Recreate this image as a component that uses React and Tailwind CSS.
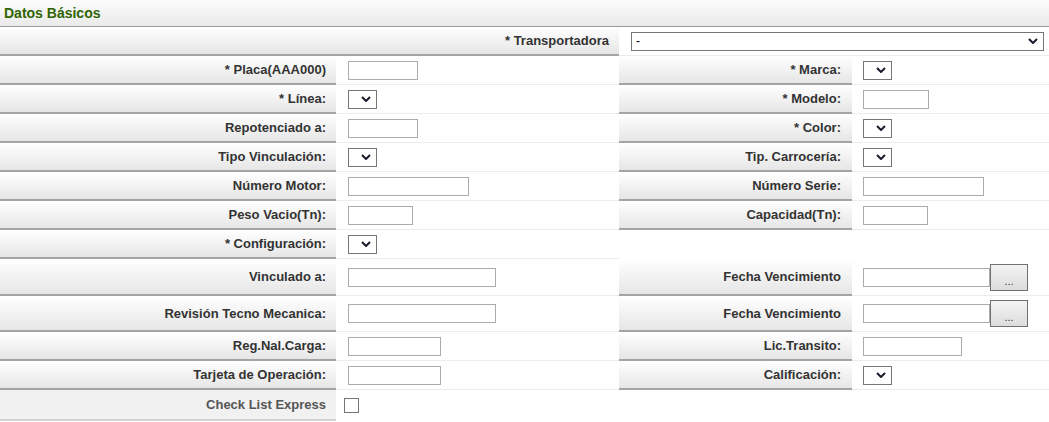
import React from "react";

const Chevron = () => (
  <svg width="10" height="6" viewBox="0 0 10 6" fill="none">
    <polyline points="1,1 5,5 9,1" stroke="#1b1b2b" strokeWidth="2" />
  </svg>
);

const Label = ({ children, right = false, span = false, h = "h-[29px]" }) => (
  <div
    className={`${h} ${span ? "col-span-2" : ""} ${
      right ? "pr-[11px]" : "pr-[10px]"
    } flex items-center justify-end pt-[1px] bg-linear-to-b from-white to-[#e6e6e6] border-b-2 border-[#a4a4a4] text-[13px] font-bold text-[#333]`}
  >
    {children}
  </div>
);

const Cell = ({ children, span = false, right = false, h = "h-[29px]" }) => (
  <div
    className={`${h} ${span ? "col-span-2" : ""} ${
      right ? "pl-[11px]" : "pl-[12px]"
    } border-b border-[#ececec] flex items-center bg-white`}
  >
    {children}
  </div>
);

const TextBox = ({ w }) => (
  <div className={`${w} h-[19px] border border-[#ababab] bg-white`} />
);

const Select = () => (
  <div className="w-[29px] h-[19px] border border-[#767676] bg-white flex items-center justify-end pr-[5px]">
    <Chevron />
  </div>
);

const DateBox = () => (
  <div className="flex items-center">
    <div className="w-[127px] h-[19px] border border-[#ababab] bg-white" />
    <div className="w-[38px] h-[27px] border border-[#707070] bg-linear-to-b from-[#f4f4f4] to-[#dcdcdc] flex items-end justify-center pb-[3px] text-[11px] leading-none text-[#333]">
      ...
    </div>
  </div>
);

export default function App() {
  return (
    <div
      className="w-[1049px] h-[422px] bg-white overflow-hidden"
      style={{ fontFamily: '"Liberation Sans", Arial, sans-serif' }}
    >
      <div className="h-[27px] border-b border-[#9a9a9a] bg-linear-to-b from-[#fcfcfc] to-[#eaeaea] flex items-center pl-[4px] text-[14px] font-bold text-[#2f6400]">
        Datos Básicos
      </div>

      <div className="grid grid-cols-[336px_283px_233px_197px]">
        <Label span>* Transportadora</Label>
        <Cell span>
          <div className="w-[413px] h-[19px] border border-[#767676] bg-white flex items-center justify-between pl-[4px] pr-[5px] text-[12px] text-black">
            <span>-</span>
            <Chevron />
          </div>
        </Cell>

        <Label>* Placa(AAA000)</Label>
        <Cell><TextBox w="w-[70px]" /></Cell>
        <Label right>* Marca:</Label>
        <Cell right><Select /></Cell>

        <Label>* Línea:</Label>
        <Cell><Select /></Cell>
        <Label right>* Modelo:</Label>
        <Cell right><TextBox w="w-[66px]" /></Cell>

        <Label>Repotenciado a:</Label>
        <Cell><TextBox w="w-[70px]" /></Cell>
        <Label right>* Color:</Label>
        <Cell right><Select /></Cell>

        <Label>Tipo Vinculación:</Label>
        <Cell><Select /></Cell>
        <Label right>Tip. Carrocería:</Label>
        <Cell right><Select /></Cell>

        <Label>Número Motor:</Label>
        <Cell><TextBox w="w-[121px]" /></Cell>
        <Label right>Número Serie:</Label>
        <Cell right><TextBox w="w-[121px]" /></Cell>

        <Label>Peso Vacio(Tn):</Label>
        <Cell><TextBox w="w-[65px]" /></Cell>
        <Label right>Capacidad(Tn):</Label>
        <Cell right><TextBox w="w-[65px]" /></Cell>

        <Label>* Configuración:</Label>
        <Cell><Select /></Cell>
        <div className="col-span-2 h-[29px] bg-white" />

        <Label h="h-[37px]">Vinculado a:</Label>
        <Cell h="h-[37px]"><TextBox w="w-[148px]" /></Cell>
        <Label right h="h-[37px]">Fecha Vencimiento</Label>
        <Cell right h="h-[37px]"><DateBox /></Cell>

        <Label h="h-[36px]">Revisión Tecno Mecanica:</Label>
        <Cell h="h-[36px]"><TextBox w="w-[148px]" /></Cell>
        <Label right h="h-[36px]">Fecha Vencimiento</Label>
        <Cell right h="h-[36px]"><DateBox /></Cell>

        <Label>Reg.Nal.Carga:</Label>
        <Cell><TextBox w="w-[93px]" /></Cell>
        <Label right>Lic.Transito:</Label>
        <Cell right><TextBox w="w-[99px]" /></Cell>

        <Label>Tarjeta de Operación:</Label>
        <Cell><TextBox w="w-[93px]" /></Cell>
        <Label right>Calificación:</Label>
        <Cell right><Select /></Cell>

        <div className="h-[31px] pr-[10px] pt-[1px] flex items-center justify-end bg-[#f1f1f1] border-b-2 border-[#d2d2d2] text-[13px] font-bold text-[#555]">
          Check List Express
        </div>
        <div className="h-[31px] flex items-center pl-[8px]">
          <div className="w-[15px] h-[15px] border border-[#767676] bg-white" />
        </div>
      </div>
    </div>
  );
}
